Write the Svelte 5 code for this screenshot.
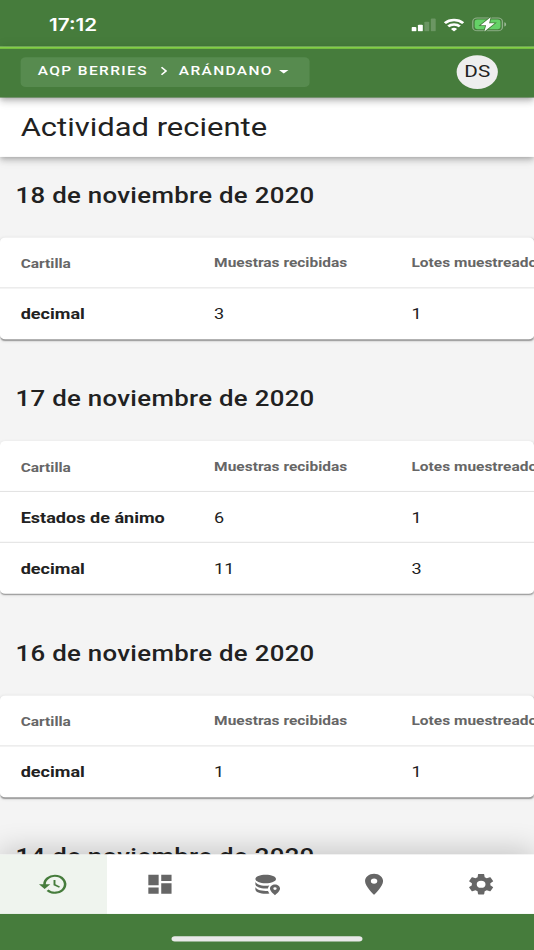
<script lang="ts">
    type Row = { name: string; samples: number; lots: number };
    type Day = { date: string; rows: Row[] };

    const days: Day[] = [
        { date: "18 de noviembre de 2020", rows: [{ name: "decimal", samples: 3, lots: 1 }] },
        {
            date: "17 de noviembre de 2020",
            rows: [
                { name: "Estados de ánimo", samples: 6, lots: 1 },
                { name: "decimal", samples: 11, lots: 3 },
            ],
        },
        { date: "16 de noviembre de 2020", rows: [{ name: "decimal", samples: 1, lots: 1 }] },
        { date: "14 de noviembre de 2020", rows: [] },
    ];

    const tabs = [
        { id: "history", path: "M12.5 8v4.9l4.3 2.5.7-1.2-3.5-2.1V8zM13.5 3a9 9 0 0 0-9 9H1.2l4.4 4.4 4.4-4.4H6.5a7 7 0 1 1 2.05 4.95l-1.42 1.42A9 9 0 1 0 13.5 3z" },
        { id: "dashboard", path: "M3 13h8V3H3v10zm0 8h8v-6H3v6zm10 0h8V11h-8v10zm0-18v6h8V3h-8z" },
        { id: "data", path: "M11 3c-4.4 0-8 1.8-8 4s3.6 4 8 4 8-1.8 8-4-3.6-4-8-4zM3 9.1v3c0 2.2 3.6 4 8 4 .6 0 1.2 0 1.7-.1.1-1 .5-2 1.1-2.8-.9.2-1.8.3-2.8.3-4.4 0-8-2.1-8-4.4zM3 14.2v2.7c0 2.2 3.6 4.1 8 4.1 1 0 2-.1 2.9-.3-.5-.8-.9-1.6-1.1-2.4-.6.1-1.2.1-1.8.1-4.4 0-8-1.9-8-4.2zM18.2 12.3c-2.2 0-3.9 1.7-3.9 3.8 0 2.8 3.9 6.3 3.9 6.3s3.9-3.5 3.9-6.3c0-2.1-1.7-3.8-3.9-3.8zm0 5.1a1.3 1.3 0 1 1 0-2.6 1.3 1.3 0 0 1 0 2.6z" },
        { id: "map", path: "M12 2C8.13 2 5 5.13 5 9c0 5.25 7 13 7 13s7-7.75 7-13c0-3.87-3.13-7-7-7zm0 9.5a2.5 2.5 0 0 1 0-5 2.5 2.5 0 0 1 0 5z" },
        { id: "settings", path: "M19.14 12.94c.04-.3.06-.61.06-.94 0-.32-.02-.64-.07-.94l2.03-1.58c.18-.14.23-.41.12-.61l-1.92-3.32c-.12-.22-.37-.29-.59-.22l-2.39.96c-.5-.38-1.03-.7-1.62-.94L14.4 2.81c-.04-.24-.24-.41-.48-.41h-3.84c-.24 0-.43.17-.47.41l-.36 2.54c-.59.24-1.13.57-1.62.94l-2.39-.96c-.22-.08-.47 0-.59.22L2.74 8.87c-.12.21-.08.47.12.61l2.03 1.58c-.05.3-.09.63-.09.94s.02.64.07.94l-2.03 1.58c-.18.14-.23.41-.12.61l1.92 3.32c.12.22.37.29.59.22l2.39-.96c.5.38 1.03.7 1.62.94l.36 2.54c.05.24.24.41.48.41h3.84c.24 0 .44-.17.47-.41l.36-2.54c.59-.24 1.13-.56 1.62-.94l2.39.96c.22.08.47 0 .59-.22l1.92-3.32c.12-.22.07-.47-.12-.61l-2.01-1.58zM12 15.4a3.4 3.4 0 1 1 0-6.8 3.4 3.4 0 0 1 0 6.8z" },
    ];

    let active = $state("history");
</script>

<div class="screen">
    <div class="status">
        <span class="time">17:12</span>
        <div class="indicators">
            <svg class="signal" width="19" height="13" viewBox="0 0 19 13" fill="#fff">
                <rect x="0" y="8.5" width="3.8" height="4" rx="0.8" />
                <rect x="5" y="6.3" width="3.8" height="6.2" rx="0.8" />
                <rect x="10" y="3.4" width="3.8" height="9.1" rx="0.8" opacity="0.2" />
                <rect x="15" y="0.5" width="3.8" height="12" rx="0.8" opacity="0.2" />
            </svg>
            <svg class="wifi" width="16" height="13" viewBox="0 0 16 13" fill="none" stroke="#fff" stroke-width="2.3">
                <path d="M.9 4.8a10.2 10.2 0 0 1 14.2 0M3.5 7.9a6.5 6.5 0 0 1 9 0" />
                <path d="M8 12.7 5.6 10.3a3.4 3.4 0 0 1 4.8 0z" fill="#fff" stroke="none" />
            </svg>
            <svg class="battery" width="27" height="14" viewBox="0 0 27 14">
                <rect x="0.5" y="1" width="23" height="12" rx="3.4" fill="none" stroke="#fff" stroke-opacity="0.4" />
                <path d="M25 5v4c.9-.4 1.4-1.1 1.4-2S25.9 5.4 25 5z" fill="#fff" opacity="0.45" />
                <rect x="2" y="2.5" width="20" height="9" rx="2" fill="#65d167" />
                <path d="M14.4.2 6.6 7.9h4.3L9.5 13.8l8-7.9h-4.3z" fill="#fff" stroke="#467c3c" stroke-width="1.4" paint-order="stroke" />
            </svg>
        </div>
    </div>

    <header class="app-bar">
        <button class="crumbs">
            <span>AQP BERRIES</span>
            <svg class="chevron" width="16" height="16" viewBox="0 0 24 24"><path d="M10 6 8.59 7.41 13.17 12l-4.58 4.59L10 18l6-6z" /></svg>
            <span>ARÁNDANO</span>
            <svg class="caret" width="16" height="16" viewBox="0 0 24 24"><path d="m6.5 10.5 5.5 5 5.5-5z" /></svg>
        </button>
        <div class="avatar">DS</div>
    </header>

    <div class="title-bar">
        <h1>Actividad reciente</h1>
    </div>

    <main>
        {#each days as day}
            <section>
                <h2>{day.date}</h2>
                {#if day.rows.length}
                    <div class="card">
                        <div class="row head">
                            <span class="first">Cartilla</span>
                            <span>Muestras recibidas</span>
                            <span>Lotes muestreados</span>
                        </div>
                        {#each day.rows as row}
                            <div class="row">
                                <strong>{row.name}</strong>
                                <span>{row.samples}</span>
                                <span>{row.lots}</span>
                            </div>
                        {/each}
                    </div>
                {/if}
            </section>
        {/each}
    </main>

    <nav>
        {#each tabs as tab}
            <button class="tab" class:active={active === tab.id} aria-label={tab.id} onclick={() => (active = tab.id)}>
                <svg width="24" height="24" viewBox="0 0 24 24"><path d={tab.path} /></svg>
            </button>
        {/each}
    </nav>
    <div class="home"><i></i></div>
</div>

<style>
    :global(body) {
        height: 100vh;
        background: #f4f4f4;
    }
    :global(#app) {
        width: 534px;
        height: 950px;
        overflow: hidden;
    }
    /* 414x896 phone layout, stretched to fill the 534x950 window */
    .screen {
        display: flex;
        flex-direction: column;
        width: 414px;
        height: 896px;
        overflow: hidden;
        transform: scale(1.28986, 1.06027);
        transform-origin: 0 0;
        background: #f4f4f4;
        color: #212121;
        font-family: Roboto, sans-serif;
    }
    button {
        border: 0;
        padding: 0;
        font: inherit;
        color: inherit;
    }
    svg {
        display: block;
        flex: none;
    }
    .status {
        position: relative;
        z-index: 3;
        flex: none;
        display: flex;
        justify-content: space-between;
        align-items: center;
        box-sizing: border-box;
        height: 44px;
        padding: 2px 21px 0 38px;
        background: #467c3c;
        color: #fff;
    }
    .time {
        font: 600 16px/20px Inter, sans-serif;
    }
    .indicators {
        display: flex;
        align-items: center;
    }
    .wifi {
        margin-left: 6px;
    }
    .battery {
        margin-left: 6px;
    }
    .app-bar {
        position: relative;
        z-index: 3;
        flex: none;
        display: flex;
        justify-content: space-between;
        align-items: flex-start;
        box-sizing: border-box;
        height: 48px;
        padding: 6px 28px 0 16px;
        border-top: 2px solid #82cf45;
        background: #467c3c;
        box-shadow: 0 2px 4px -1px rgba(0, 0, 0, 0.2), 0 4px 5px rgba(0, 0, 0, 0.14), 0 1px 10px rgba(0, 0, 0, 0.12);
    }
    .crumbs {
        display: flex;
        align-items: center;
        box-sizing: border-box;
        width: 224px;
        height: 28px;
        margin-top: 2px;
        padding: 0 0 2px 13.3px;
        border-radius: 4px;
        background: #578b4f;
        color: #fff;
        fill: #fff;
        font-size: 12px;
        font-weight: 500;
        letter-spacing: 1.06px;
    }
    .chevron {
        margin: 0 4px;
    }
    .avatar {
        width: 32px;
        height: 32px;
        border-radius: 50%;
        background: #eee;
        font-size: 16px;
        line-height: 32px;
        text-align: center;
    }
    .title-bar {
        position: relative;
        z-index: 2;
        flex: none;
        display: flex;
        align-items: center;
        height: 56px;
        padding: 0 16px;
        background: #fff;
        box-shadow: 0 2px 4px -1px rgba(0, 0, 0, 0.2), 0 4px 5px rgba(0, 0, 0, 0.14), 0 1px 10px rgba(0, 0, 0, 0.12);
    }
    h1 {
        margin: 0;
        font-size: 24px;
        font-weight: 400;
    }
    main {
        flex: 1;
        min-height: 0;
        overflow: hidden;
    }
    h2 {
        margin: 0;
        padding: 20px 12px 24px;
        font-size: 20px;
        font-weight: 500;
        line-height: 32px;
        letter-spacing: 0.24px;
    }
    section + section {
        padding-top: 20px;
    }
    .card {
        border-radius: 4px;
        background: #fff;
        box-shadow: 0 2px 1px -1px rgba(0, 0, 0, 0.2), 0 1px 1px rgba(0, 0, 0, 0.14), 0 1px 3px rgba(0, 0, 0, 0.12);
    }
    .row {
        display: grid;
        grid-template-columns: 150px 153px 150px;
        align-items: center;
        box-sizing: border-box;
        height: 48px;
        padding: 0 0 1px 16px;
        overflow: hidden;
        font-size: 14px;
        white-space: nowrap;
    }
    .row:not(:last-child) {
        padding-bottom: 0;
        border-bottom: 1px solid #e3e3e3;
    }
    .head {
        color: #666;
        font-size: 12px;
        font-weight: 700;
    }
    .head .first {
        padding-top: 2px;
    }
    nav {
        position: relative;
        z-index: 2;
        flex: none;
        display: flex;
        height: 56px;
        background: #fff;
        box-shadow: 0 -4px 25px rgba(0, 0, 0, 0.2);
    }
    .tab {
        flex: 1;
        display: flex;
        align-items: center;
        justify-content: center;
        background: #fff;
        fill: #666;
    }
    .tab.active {
        background: #eff4ee;
        fill: #467c3c;
    }
    .home {
        position: relative;
        z-index: 3;
        flex: none;
        display: flex;
        justify-content: center;
        box-sizing: border-box;
        height: 34px;
        padding-top: 21px;
        background: #467c3c;
    }
    .home i {
        width: 148px;
        height: 5px;
        border-radius: 3px;
        background: #e9e9e9;
    }
</style>
